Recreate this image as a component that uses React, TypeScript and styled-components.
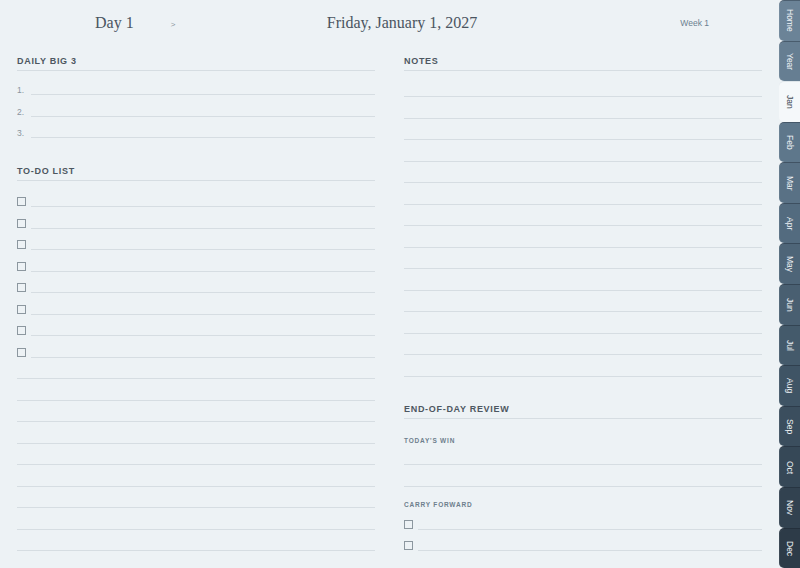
import React from 'react'
import styled, { createGlobalStyle } from 'styled-components'

const GlobalStyle = createGlobalStyle`
  html, body {
    margin: 0;
    padding: 0;
    height: 100%;
    background: #edf2f5;
  }
  #root {
    height: 100%;
  }
  * {
    box-sizing: border-box;
  }
`

const Shell = styled.div`
  display: flex;
  height: 100vh;
  background: #edf2f5;
  font-family: 'Liberation Sans', Arial, sans-serif;
  overflow: hidden;
`

const Sheet = styled.div`
  flex: 1;
  display: flex;
  flex-direction: column;
  padding: 0 17px;
`

const Header = styled.header`
  height: 45px;
  display: grid;
  grid-template-columns: 1fr auto 1fr;
  align-items: center;
  padding: 1px 53px 0 78px;
`

const DayGroup = styled.div`
  display: flex;
  align-items: center;
  gap: 37px;
`

const SerifTitle = styled.div`
  font-family: 'Liberation Serif', 'Times New Roman', serif;
  font-size: 16px;
  color: #4a5561;
`

const NextArrow = styled.span`
  font-size: 8px;
  color: #8a959e;
  padding-top: 2px;
`

const WeekLabel = styled.div`
  justify-self: end;
  font-size: 8.5px;
  color: #6b7f90;
`

const Columns = styled.div`
  display: grid;
  grid-template-columns: 1fr 1fr;
  column-gap: 29px;
`

const Column = styled.div`
  display: flex;
  flex-direction: column;
`

const SectionTitle = styled.h2<{ $gap?: number }>`
  margin: ${(p) => p.$gap ?? 0}px 0 0;
  height: 26px;
  display: flex;
  align-items: flex-end;
  padding-bottom: 3px;
  border-bottom: 1px solid #d6dde2;
  font-size: 9px;
  line-height: 11px;
  font-weight: 700;
  letter-spacing: 0.7px;
  color: #4d5761;
`

const Lines = styled.div<{ $gap?: number }>`
  display: flex;
  flex-direction: column;
  margin-top: ${(p) => p.$gap ?? 0}px;
`

const Row = styled.div`
  height: 21.5px;
  display: flex;
  align-items: flex-end;
`

const Marker = styled.span`
  width: 14px;
  flex: none;
  font-size: 8.5px;
  line-height: 10px;
  color: #8a959e;
`

const Box = styled.span`
  width: 14px;
  flex: none;
  display: flex;
  padding-bottom: 1px;
  &::before {
    content: '';
    width: 7px;
    height: 7px;
    border: 1px solid #8c979f;
  }
`

const Rule = styled.span`
  flex: 1;
  border-bottom: 1px solid #d6dde2;
`

const SubLabel = styled.div<{ $top: number }>`
  padding-top: ${(p) => p.$top}px;
  font-size: 6.5px;
  line-height: 7px;
  font-weight: 700;
  letter-spacing: 0.8px;
  color: #6e7f8d;
`

const TabRail = styled.nav`
  width: 21px;
  flex: none;
  display: flex;
  flex-direction: column;
`

const Tab = styled.div<{ $bg: string; $active?: boolean }>`
  flex: 1;
  display: flex;
  align-items: center;
  justify-content: center;
  background: ${(p) => p.$bg};
  border-radius: 5px 0 0 5px;
  border-top: 1px solid ${(p) => (p.$active ? '#dfe6ea' : 'rgba(20, 30, 40, 0.35)')};
  box-shadow: ${(p) => (p.$active ? 'none' : 'inset 1px 0 0 rgba(255,255,255,0.08)')};
  writing-mode: vertical-rl;
  font-size: 8.5px;
  color: ${(p) => (p.$active ? '#3e4a55' : '#eef2f5')};
`

const tabs = [
  { label: 'Home', bg: '#6b8397' },
  { label: 'Year', bg: '#667e92' },
  { label: 'Jan', bg: '#f5f8fa', active: true },
  { label: 'Feb', bg: '#5e778b' },
  { label: 'Mar', bg: '#597185' },
  { label: 'Apr', bg: '#536b7f' },
  { label: 'May', bg: '#4e6578' },
  { label: 'Jun', bg: '#495f71' },
  { label: 'Jul', bg: '#445a6b' },
  { label: 'Aug', bg: '#3f5465' },
  { label: 'Sep', bg: '#3b4e5e' },
  { label: 'Oct', bg: '#364857' },
  { label: 'Nov', bg: '#324250' },
  { label: 'Dec', bg: '#2d3b48' }
]

const range = (n: number) => Array.from({ length: n }, (_, i) => i)

export default function App() {
  return (
    <Shell>
      <GlobalStyle />
      <Sheet>
        <Header>
          <DayGroup>
            <SerifTitle>Day 1</SerifTitle>
            <NextArrow>&gt;</NextArrow>
          </DayGroup>
          <SerifTitle>Friday, January 1, 2027</SerifTitle>
          <WeekLabel>Week 1</WeekLabel>
        </Header>

        <Columns>
          <Column>
            <SectionTitle>DAILY BIG 3</SectionTitle>
            <Lines $gap={2.5}>
              {range(3).map((i) => (
                <Row key={i}>
                  <Marker>{i + 1}.</Marker>
                  <Rule />
                </Row>
              ))}
            </Lines>

            <SectionTitle $gap={17}>TO-DO LIST</SectionTitle>
            <Lines $gap={4.5}>
              {range(8).map((i) => (
                <Row key={'t' + i}>
                  <Box />
                  <Rule />
                </Row>
              ))}
              {range(9).map((i) => (
                <Row key={'l' + i}>
                  <Rule />
                </Row>
              ))}
            </Lines>
          </Column>

          <Column>
            <SectionTitle>NOTES</SectionTitle>
            <Lines $gap={4.5}>
              {range(14).map((i) => (
                <Row key={i}>
                  <Rule />
                </Row>
              ))}
            </Lines>

            <SectionTitle $gap={16}>END-OF-DAY REVIEW</SectionTitle>
            <SubLabel $top={18}>TODAY&apos;S WIN</SubLabel>
            <Lines>
              {range(2).map((i) => (
                <Row key={i}>
                  <Rule />
                </Row>
              ))}
            </Lines>
            <SubLabel $top={14.5}>CARRY FORWARD</SubLabel>
            <Lines>
              {range(2).map((i) => (
                <Row key={i}>
                  <Box />
                  <Rule />
                </Row>
              ))}
            </Lines>
          </Column>
        </Columns>
      </Sheet>

      <TabRail>
        {tabs.map((t) => (
          <Tab key={t.label} $bg={t.bg} $active={t.active}>
            {t.label}
          </Tab>
        ))}
      </TabRail>
    </Shell>
  )
}
